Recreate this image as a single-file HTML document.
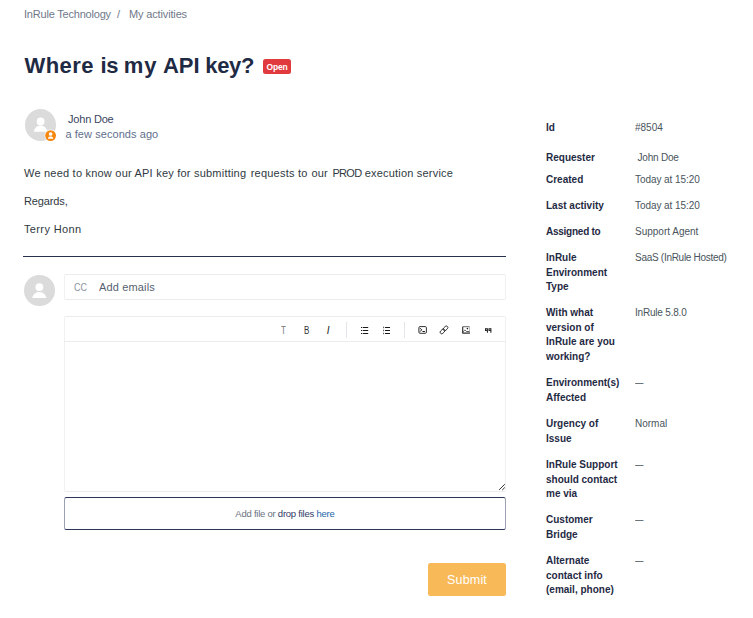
<!DOCTYPE html>
<html lang="en">
<head>
<meta charset="utf-8">
<title>Where is my API key?</title>
<style>
html,body{margin:0;padding:0;background:#fff;}
body{width:753px;height:618px;position:relative;overflow:hidden;font-family:"Liberation Sans",sans-serif;color:#2f3941;}
.t{position:absolute;white-space:nowrap;line-height:1;margin:0;padding:0;}
.bc{font-size:11px;color:#70788a;top:9px;letter-spacing:-.2px;}
h1.t{font-size:22px;font-weight:bold;color:#1f2a44;left:24px;top:55px;letter-spacing:.2px;}
.badge{position:absolute;left:263px;top:59px;width:28px;height:15px;background:#e0393e;border-radius:2.5px;color:#fff;font-size:8.5px;font-weight:bold;text-align:center;line-height:15px;letter-spacing:-.2px;}
.av{position:absolute;width:31px;height:31px;border-radius:50%;background:#dbdbdb;overflow:hidden;}
.body{font-size:11px;color:#2f3941;left:24px;letter-spacing:.19px;}
.hr{position:absolute;left:23px;top:256px;width:483px;height:1px;background:#26314d;}
.box{position:absolute;box-sizing:border-box;border:1px solid #ececec;border-color:#ececec #f1f1f1;border-radius:2px;background:#fff;}
.lab{font-size:10px;font-weight:bold;color:#1f2a44;left:546px;line-height:14.67px;}
.val{font-size:10px;color:#49545c;left:635px;line-height:14.67px;}
.ic{position:absolute;overflow:visible;}
</style>
</head>
<body>
<span class="t bc" style="left:24px">InRule Technology</span>
<span class="t bc" style="left:117px">/</span>
<span class="t bc" style="left:129px;letter-spacing:-.15px">My activities</span>

<h1 class="t"><span style="margin-left:.5px;letter-spacing:.44px">Where </span><span style="letter-spacing:-.4px">is </span><span style="letter-spacing:.85px">my </span><span style="margin-left:-1.200px;letter-spacing:-.07px">API </span><span style="margin-left:-.3px;letter-spacing:-.35px">key?</span></h1>
<div class="badge"><span style="display:inline-block;transform:translateY(.5px) scaleY(1.12)">Open</span></div>

<div class="av" style="left:24.800px;top:109px;height:32.300px">
<svg width="31" height="33" viewBox="0 0 31 33"><circle cx="15.600" cy="12.500" r="3.900" fill="#fff"/><path d="M8.800 22.800c.4-3.400 3.400-6.200 6.800-6.200s6.400 2.800 6.800 6.200z" fill="#fff"/></svg>
</div>
<svg class="ic" style="left:44px;top:129px" width="14" height="14" viewBox="0 0 14 14"><circle cx="6.600" cy="6.600" r="6" fill="#fff"/><circle cx="6.600" cy="6.600" r="5.400" fill="#f5870f"/><circle cx="6.600" cy="5" r="1.850" fill="#fff"/><path d="M4 9.700c0-1.700 1.100-2.300 2.600-2.300s2.600.6 2.600 2.300z" fill="#fff"/></svg>

<span class="t" style="left:68px;top:113.500px;font-size:11px;color:#3a4560;letter-spacing:-.2px">John Doe</span>
<span class="t" style="left:65.400px;top:128.500px;font-size:11px;color:#5f6f8c;letter-spacing:.07px">a few seconds ago</span>

<span class="t body" style="top:167.700px"><span style="letter-spacing:.216px">We need to know our API key for submitting </span><span style="margin-left:1.200px;letter-spacing:.216px">requests to </span><span style="margin-left:.6px;letter-spacing:.216px">our </span><span style="margin-left:1.200px;letter-spacing:-.66px">PROD</span><span> execution service</span></span>
<span class="t body" style="top:195.500px;letter-spacing:-.12px">Regards,</span>
<span class="t body" style="top:224.300px;letter-spacing:.36px">Terry Honn</span>

<div class="hr"></div>

<div class="av" style="left:24px;top:274.800px;height:31.300px">
<svg width="31" height="32" viewBox="0 0 31 32"><circle cx="15.400" cy="12.200" r="3.850" fill="#fff"/><path d="M8.200 23.100c.4-3.400 3.600-6.150 7.100-6.150s6.700 2.750 7.100 6.150z" fill="#fff"/></svg>
</div>

<div class="box" style="left:64px;top:274px;width:442px;height:26px;border-radius:2px"></div>
<span class="t" style="left:73.500px;top:282px;font-size:11px;color:#8a93a0;transform:scaleX(.82);transform-origin:0 0">CC</span>
<span class="t" style="left:99px;top:282px;font-size:11px;color:#555f70;letter-spacing:.15px">Add emails</span>

<div class="box" style="left:64px;top:316px;width:442px;height:176px"></div>
<div style="position:absolute;left:64px;top:341px;width:442px;height:1px;background:#ececec"></div>

<!-- toolbar -->
<span class="t" style="left:281px;top:326px;font-size:10px;color:#777;transform:scaleX(.8);transform-origin:0 0">T</span>
<span class="t" style="left:303.500px;top:326px;font-size:10px;color:#333;transform:scaleX(.8);transform-origin:0 0">B</span>
<span class="t" style="left:326.800px;top:326px;font-size:10px;color:#222;font-style:italic">I</span>
<div style="position:absolute;left:346px;top:322px;width:1px;height:16px;background:#e3e5e8"></div>
<svg class="ic" style="left:360px;top:326px" width="10" height="9" viewBox="0 0 10 9" fill="#1a1a1a"><rect x="1" y="1" width="1.300" height="1"/><rect x="1" y="4" width="1.300" height="1"/><rect x="1" y="7" width="1.300" height="1"/><rect x="3" y="1" width="5.200" height="1"/><rect x="3" y="4" width="5.200" height="1"/><rect x="3" y="7" width="5.200" height="1"/></svg>
<svg class="ic" style="left:382px;top:326px" width="10" height="9" viewBox="0 0 10 9" fill="#1a1a1a"><rect x="1.100" y=".7" width="1" height="1.500" opacity=".75"/><rect x="1.100" y="3.700" width="1" height="1.500" opacity=".75"/><rect x="1.100" y="6.700" width="1" height="1.500" opacity=".75"/><rect x="3" y="1" width="5" height="1"/><rect x="3" y="4" width="5" height="1"/><rect x="3" y="7" width="5" height="1"/></svg>
<div style="position:absolute;left:404px;top:322px;width:1px;height:16px;background:#e3e5e8"></div>
<svg class="ic" style="left:418px;top:326px" width="10" height="9" viewBox="0 0 10 9" fill="none" stroke="#262626" stroke-width=".95"><rect x=".9" y=".6" width="7.500" height="6.700" rx="1.100"/><path d="M2.100 2.200l1.600 1.700-1.600 1.700M4.500 5.500h2.400" stroke="#111" stroke-width="1"/></svg>
<svg class="ic" style="left:439px;top:325px" width="11" height="10" viewBox="0 0 11 10" fill="none" stroke="#262626" stroke-width=".9"><rect x="-2.700" y="-1.600" width="5.400" height="3.200" rx="1.600" transform="translate(3.500 6.400) rotate(-45)"/><rect x="-2.700" y="-1.600" width="5.400" height="3.200" rx="1.600" transform="translate(6.500 3.400) rotate(-45)"/></svg>
<svg class="ic" style="left:462px;top:326px" width="10" height="9" viewBox="0 0 10 9" fill="none" stroke="#262626" stroke-width=".95"><path d="M.7 7.100V.7" stroke-width="1.100"/><path d="M.7.700h6.800" stroke="#555" stroke-width=".9"/><path d="M7.500.7v6.200" stroke="#aaa" stroke-width=".8"/><path d="M.3 7.100h7.600" stroke-width="1.200"/><circle cx="5.400" cy="2.600" r=".8" fill="#1a1a1a" stroke="none"/><path d="M1.200 5.600c.6-.9 1.300-1.400 2-1.300.6.100.9.800 1.400 1.200h2.600" stroke-width=".8"/></svg>
<svg class="ic" style="left:485px;top:328px" width="8" height="6" viewBox="0 0 8 6" fill="#1a1a1a"><path d="M0 .3h2.900v4.500h-1v-1.800h-1.900zM3.500.3h2.900v4.500h-1v-1.800h-1.900z"/><path d="M.9 1.100h1.100v1.100h-1.100zM4.400 1.100h1.100v1.100h-1.100z" fill="#fff" opacity=".55"/></svg>
<!-- resize handle -->
<svg class="ic" style="left:498px;top:483px" width="8" height="8" viewBox="0 0 8 8" fill="none" stroke="#333" stroke-width="1"><path d="M1.100 6.900L6.800 1.200M4.200 7.100L6.800 4.500"/></svg>

<div class="box" style="left:64px;top:497px;width:442px;height:33px;border-radius:2.500px;border-color:#2c3756 #9aa1b2"></div>
<span class="t" style="left:235.300px;top:508.500px;font-size:9.500px;letter-spacing:-.24px;color:#6b7280">Add file or <span style="color:#303a66">drop files </span><span style="color:#2566a8">here</span></span>

<div class="btn" style="position:absolute;left:428px;top:563px;width:78px;height:33px;background:#f8b959;border-radius:2.500px;color:#fff;font-size:12.500px;letter-spacing:.2px;text-align:center;line-height:35px;overflow:hidden">Submit</div>

<!-- sidebar -->
<span class="t lab" style="top:121px">Id</span><span class="t val" style="top:121px">#8504</span>
<span class="t lab" style="top:151px">Requester</span><span class="t val" style="top:151px;left:637.500px;letter-spacing:-.2px">John Doe</span>
<span class="t lab" style="top:173px">Created</span><span class="t val" style="top:173px;letter-spacing:-.07px">Today at 15:20</span>
<span class="t lab" style="top:199px">Last activity</span><span class="t val" style="top:199px;letter-spacing:-.07px">Today at 15:20</span>
<span class="t lab" style="top:225px;letter-spacing:-.25px">Assigned to</span><span class="t val" style="top:225px">Support Agent</span>
<span class="t lab" style="top:251px">InRule<br>Environment<br>Type</span><span class="t val" style="top:251px;letter-spacing:-.28px">SaaS (InRule Hosted)</span>
<span class="t lab" style="top:306px">With what<br>version of<br>InRule are you<br>working?</span><span class="t val" style="top:306px;letter-spacing:-.2px">InRule 5.8.0</span>
<span class="t lab" style="top:376px">Environment(s)<br>Affected</span><span class="t val" style="top:376px;transform:scaleX(.84);transform-origin:0 0">—</span>
<span class="t lab" style="top:417px">Urgency of<br>Issue</span><span class="t val" style="top:417px">Normal</span>
<span class="t lab" style="top:458px">InRule Support<br>should contact<br>me via</span><span class="t val" style="top:458px;transform:scaleX(.84);transform-origin:0 0">—</span>
<span class="t lab" style="top:513px">Customer<br>Bridge</span><span class="t val" style="top:513px;transform:scaleX(.84);transform-origin:0 0">—</span>
<span class="t lab" style="top:554px">Alternate<br>contact info<br>(email, phone)</span><span class="t val" style="top:554px;transform:scaleX(.84);transform-origin:0 0">—</span>
</body>
</html>
